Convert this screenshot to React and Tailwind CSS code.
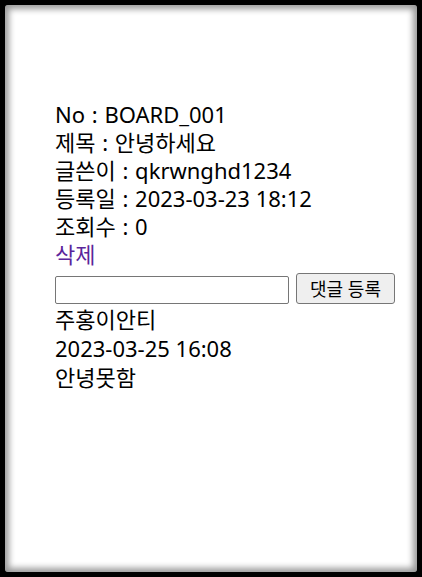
const info = [
  { label: "No", value: "BOARD_001" },
  { label: "제목", value: "안녕하세요" },
  { label: "글쓴이", value: "qkrwnghd1234" },
  { label: "등록일", value: "2023-03-23 18:12" },
  { label: "조회수", value: "0" },
];

const BoardDetail = () => {
  return (
    <div className="h-[577px] w-[422px] bg-black p-[5px] font-['Noto_Sans','Noto_Sans_CJK_KR',sans-serif]">
      <div className="flex h-full flex-col rounded-[3px] bg-white pl-[50px] pt-[95px] shadow-[inset_0_0_6px_4px_rgba(0,0,0,0.4)]">
        {info.map((row) => (
          <div key={row.label} className="text-[22px] leading-[28px] text-black">
            {row.label} <span className="px-[1px]">:</span> {row.value}
          </div>
        ))}
        <a href="#" className="self-start text-[22px] leading-[28px] text-[#5b259b]">
          삭제
        </a>

        {/* 댓글 입력 */}
        <div className="flex items-end gap-[7px] pt-[5px] pb-[1px]">
          <input
            type="text"
            className="h-[28px] w-[234px] rounded-[2px] border border-[#767676] px-1 text-sm"
          />
          <button className="h-[31px] w-[99px] rounded-[3px] border border-[#767676] bg-[#efefef] text-[18px] leading-none text-black">
            댓글 등록
          </button>
        </div>

        <div className="text-[22px] leading-[29px] text-black">
          <div>주홍이안티</div>
          <div>2023-03-25 16:08</div>
          <div>안녕못함</div>
        </div>
      </div>
    </div>
  );
};

export default function App() {
  return <BoardDetail />;
}
